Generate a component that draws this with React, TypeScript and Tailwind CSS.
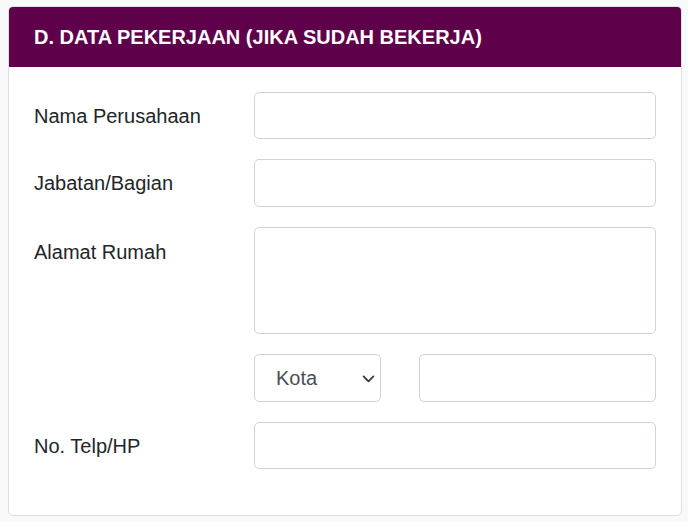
export default function App() {
    const box = "w-full rounded-[5px] border border-[#ced4da] bg-white";

    return (
        <main className="min-h-[522px] w-full bg-[#f8f9fa] pt-[6px] pl-[8px] font-['Liberation_Sans',Arial,sans-serif]">
            <section className="flex h-[510px] w-[674px] flex-col rounded-[5px] border border-[#dfdfdf] bg-white">
                {/* Header */}
                <div className="flex h-[60px] items-center rounded-t-[4px] bg-[#5f004a] pl-[25px]">
                    <h2 className="text-[20px] font-bold text-white">D. DATA PEKERJAAN (JIKA SUDAH BEKERJA)</h2>
                </div>

                {/* Form */}
                <div className="flex flex-col gap-[20px] pt-[25px] pl-[25px] pr-[25px] text-[20px] text-[#212529]">
                    <div className="flex items-center">
                        <label className="w-[220px] shrink-0">Nama Perusahaan</label>
                        <input type="text" className={`h-[47px] ${box}`} />
                    </div>
                    <div className="flex items-center">
                        <label className="w-[220px] shrink-0">Jabatan/Bagian</label>
                        <input type="text" className={`h-[48px] ${box}`} />
                    </div>
                    <div className="flex items-start">
                        <label className="w-[220px] shrink-0 pt-[10px]">Alamat Rumah</label>
                        <textarea className={`h-[107px] resize-none ${box}`} />
                    </div>
                    <div className="flex items-center">
                        <div className="w-[220px] shrink-0" />
                        <div className="flex h-[48px] w-[127px] shrink-0 items-center justify-between rounded-[5px] border border-[#ced4da] bg-white pl-[21px] pr-[5px] text-[#495057]">
                            <span>Kota</span>
                            <svg width="13" height="13" viewBox="0 0 16 16" fill="none" stroke="#343a40" strokeWidth="2.2" strokeLinecap="round" strokeLinejoin="round">
                                <path d="M2 5.5l6 6 6-6" />
                            </svg>
                        </div>
                        <div className="ml-[38px] h-[48px] flex-1 rounded-[5px] border border-[#ced4da] bg-white" />
                    </div>
                    <div className="flex items-center">
                        <label className="w-[220px] shrink-0">No. Telp/HP</label>
                        <input type="text" className={`h-[47px] ${box}`} />
                    </div>
                </div>
            </section>
        </main>
    );
}
